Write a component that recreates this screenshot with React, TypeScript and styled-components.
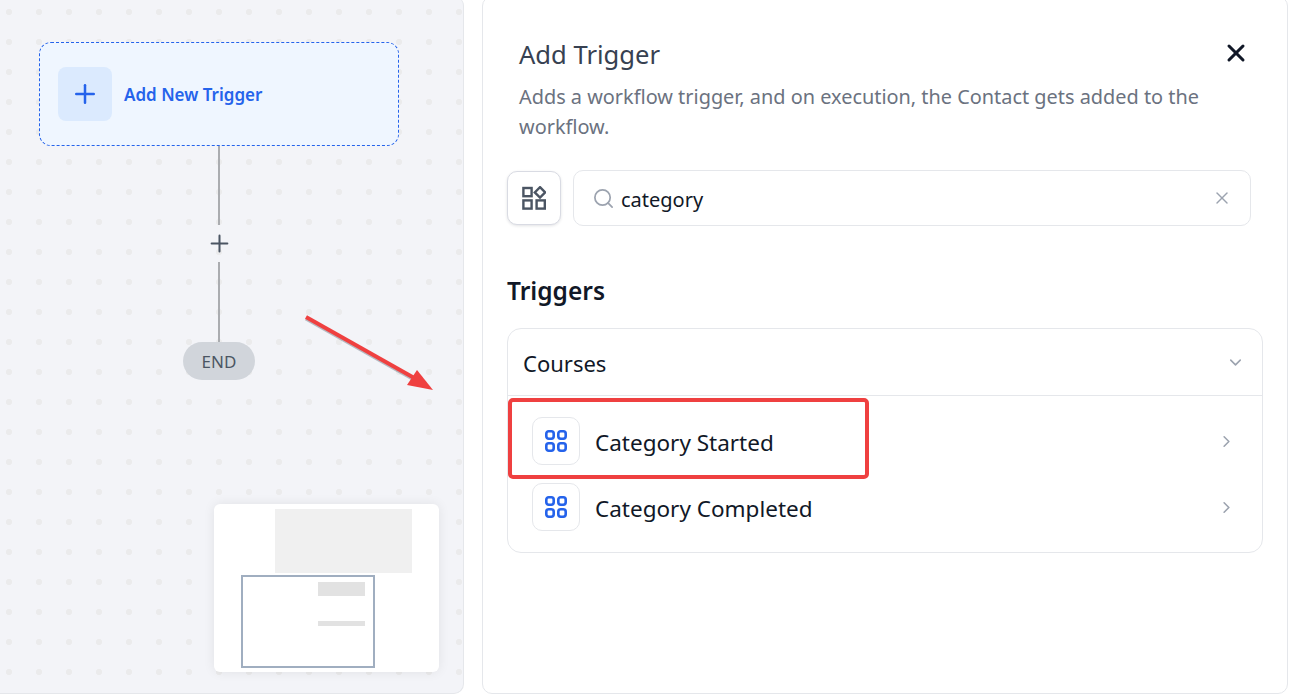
import { FC } from "react"
import styled, { createGlobalStyle } from "styled-components"
import { ChevronDown, ChevronRight, Plus, Search, X } from "lucide-react"

const GlobalStyle = createGlobalStyle`
	html, body {
		margin: 0;
		height: 100%;
		background: #fff;
		font-family: "Noto Sans", "Open Sans", sans-serif;
		overflow: hidden;
	}
	* {
		box-sizing: border-box;
	}
`

const triggers = ["Category Started", "Category Completed"]

const GridIcon: FC = () => (
	<svg width="24" height="24" viewBox="0 0 24 24" fill="none" stroke="#2563eb" strokeWidth="2.6">
		<rect x="2.3" y="2.3" width="7.4" height="7.4" rx="2.4" />
		<rect x="14.3" y="2.3" width="7.4" height="7.4" rx="2.4" />
		<rect x="2.3" y="14.3" width="7.4" height="7.4" rx="2.4" />
		<rect x="14.3" y="14.3" width="7.4" height="7.4" rx="2.4" />
	</svg>
)

const ShapesIcon: FC = () => (
	<svg width="24" height="24" viewBox="0 0 24 24" fill="none" stroke="#4b5563" strokeWidth="2.4">
		<rect x="1.4" y="2" width="8.2" height="8.2" />
		<rect x="1.4" y="14.4" width="8.2" height="8.2" />
		<rect x="14.6" y="14.4" width="8.2" height="8.2" />
		<path d="M18 1.2 L23.2 6.4 L18 11.6 L12.8 6.4 Z" />
	</svg>
)

const App: FC = () => {
	return (
		<Page>
			<GlobalStyle />
			<Canvas>
				<TriggerNode>
					<PlusTile>
						<Plus size={30} strokeWidth={2} />
					</PlusTile>
					<span>Add New Trigger</span>
				</TriggerNode>
				<Connector $height={79} />
				<AddStep>
					<Plus size={27} strokeWidth={1.8} />
				</AddStep>
				<Connector $height={80} />
				<EndPill>END</EndPill>

				<Arrow width="140" height="84" viewBox="0 0 140 84">
					<path d="M2 4.5 L112 66.5" stroke="#6b7280" strokeWidth="4" opacity="0.45" />
					<path d="M2 3 L112 65" stroke="#ef4040" strokeWidth="4" />
					<path d="M113 56 L129 76 L103 71 Z" fill="#ef4040" />
				</Arrow>

				<MiniMap>
					<svg width="225" height="168" viewBox="0 0 225 168">
						<rect x="61" y="5" width="137" height="64" fill="#f0f0f0" />
						<rect x="104" y="78" width="47" height="14" fill="#e2e2e2" />
						<rect x="104" y="117" width="47" height="5" fill="#e2e2e2" />
						<rect x="28" y="72" width="132" height="91" fill="none" stroke="#a0aec0" strokeWidth="2" />
					</svg>
				</MiniMap>
			</Canvas>

			<Panel>
				<PanelHeader>
					<div>
						<Title>Add Trigger</Title>
						<Description>Adds a workflow trigger, and on execution, the Contact gets added to the workflow.</Description>
					</div>
					<CloseButton>
						<X size={28} strokeWidth={2.6} />
					</CloseButton>
				</PanelHeader>

				<SearchRow>
					<FilterButton>
						<ShapesIcon />
					</FilterButton>
					<SearchBox>
						<Search size={23} color="#9ca3af" strokeWidth={1.8} />
						<SearchText>category</SearchText>
						<X size={20} color="#9ca3af" strokeWidth={1.7} />
					</SearchBox>
				</SearchRow>

				<SectionTitle>Triggers</SectionTitle>

				<Accordion>
					<AccordionHeader>
						<HeaderLabel>Courses</HeaderLabel>
						<ChevronDown size={19} color="#9ca3af" strokeWidth={2} />
					</AccordionHeader>
					<TriggerList>
						{triggers.map((name, i) => (
							<TriggerRow key={name}>
								<IconTile>
									<GridIcon />
								</IconTile>
								<TriggerName>{name}</TriggerName>
								<ChevronRight size={19} color="#9ca3af" strokeWidth={2} />
								{i === 0 && <Highlight />}
							</TriggerRow>
						))}
					</TriggerList>
				</Accordion>
			</Panel>
		</Page>
	)
}
export default App

const Page = styled.div`
	display: flex;
	gap: 18px;
	width: 1300px;
	height: 694px;
	padding-right: 12px;
	overflow: hidden;
`

const Canvas = styled.div`
	position: relative;
	flex: 0 0 464px;
	height: 698px;
	margin-top: -4px;
	padding: 46px 25px 0 0;
	display: flex;
	flex-direction: column;
	align-items: center;
	background-color: #f3f4f8;
	background-image: radial-gradient(circle, #ebebec 2.8px, transparent 3.3px);
	background-size: 30px 30px;
	background-position: -6px 1px;
	border: solid #e5e7eb;
	border-width: 0 1px 1px 0;
	border-radius: 0 10px 10px 0;
`

const TriggerNode = styled.div`
	flex: none;
	display: flex;
	align-items: center;
	gap: 12px;
	width: 360px;
	height: 104px;
	padding-left: 18px;
	background: #eff6ff;
	border: 1px dashed #2563eb;
	border-radius: 12px;
	color: #2563eb;
	font-size: 17px;
	font-weight: 600;
`

const PlusTile = styled.div`
	display: flex;
	align-items: center;
	justify-content: center;
	width: 54px;
	height: 54px;
	background: #dbeafe;
	border-radius: 8px;
`

const Connector = styled.div<{ $height: number }>`
	flex: none;
	width: 2px;
	height: ${p => p.$height}px;
	background: #aaacb0;
`

const AddStep = styled.div`
	flex: none;
	display: flex;
	align-items: center;
	justify-content: center;
	height: 37px;
	padding-bottom: 1px;
	color: #4b5563;
`

const EndPill = styled.div`
	flex: none;
	display: flex;
	align-items: center;
	justify-content: center;
	width: 72px;
	height: 38px;
	background: #d1d5db;
	border-radius: 19px;
	color: #4b5563;
	font-size: 17px;
`

const Arrow = styled.svg`
	position: absolute;
	left: 304px;
	top: 318px;
`

const MiniMap = styled.div`
	position: absolute;
	left: 214px;
	top: 508px;
	width: 225px;
	height: 168px;
	background: #fff;
	border-radius: 6px;
	box-shadow: 0 0 12px rgba(0, 0, 0, 0.08);
	svg {
		display: block;
	}
`

const Panel = styled.div`
	flex: 1;
	height: 698px;
	margin-top: -4px;
	padding: 4px 24px 0;
	background: #fff;
	border: 1px solid #e5e7eb;
	border-radius: 10px;
`

const PanelHeader = styled.div`
	display: flex;
	justify-content: space-between;
	align-items: flex-start;
	padding: 34px 13px 0 12px;
`

const Title = styled.h2`
	margin: 0;
	font-size: 25.6px;
	font-weight: 400;
	line-height: 40px;
	color: #374151;
`

const Description = styled.p`
	margin: 7px 0 0;
	max-width: 690px;
	font-size: 19.9px;
	line-height: 30px;
	color: #6b7280;
`

const CloseButton = styled.div`
	display: flex;
	margin-top: 4px;
	color: #111827;
`

const SearchRow = styled.div`
	display: flex;
	align-items: center;
	gap: 12px;
	margin-top: 28px;
	padding-right: 12px;
`

const FilterButton = styled.div`
	display: flex;
	align-items: center;
	justify-content: center;
	width: 54px;
	height: 54px;
	background: #fff;
	border: 1px solid #d9dbe3;
	border-radius: 10px;
	box-shadow: 0 1px 3px rgba(16, 24, 40, 0.12);
`

const SearchBox = styled.div`
	flex: 1;
	display: flex;
	align-items: center;
	height: 56px;
	padding: 0 18px;
	border: 1px solid #e5e7eb;
	border-radius: 10px;
`

const SearchText = styled.span`
	flex: 1;
	margin-left: 6px;
	padding-top: 2px;
	font-size: 20px;
	color: #111827;
`

const SectionTitle = styled.h3`
	margin: 44px 0 16px;
	font-size: 24.5px;
	font-weight: 600;
	line-height: 42px;
	color: #111827;
`

const Accordion = styled.div`
	border: 1px solid #e5e7eb;
	border-radius: 14px;
`

const AccordionHeader = styled.div`
	display: flex;
	align-items: center;
	justify-content: space-between;
	height: 67px;
	padding: 0 17px 0 15px;
	border-bottom: 1px solid #e5e7eb;
	font-size: 22px;
	color: #111827;
`

const HeaderLabel = styled.span`
	padding-top: 2px;
`

const TriggerList = styled.div`
	display: flex;
	flex-direction: column;
	gap: 18px;
	padding: 21px 26px 21px 24px;
`

const TriggerRow = styled.div`
	position: relative;
	display: flex;
	align-items: center;
	height: 48px;
`

const IconTile = styled.div`
	display: flex;
	align-items: center;
	justify-content: center;
	width: 48px;
	height: 48px;
	border: 1px solid #e5e7eb;
	border-radius: 10px;
`

const TriggerName = styled.span`
	flex: 1;
	margin-left: 15px;
	padding-top: 2px;
	font-size: 22.5px;
	color: #111827;
`

const Highlight = styled.div`
	position: absolute;
	left: -24px;
	top: -19px;
	width: 361px;
	height: 81px;
	border: 4px solid #ef4040;
	border-radius: 5px;
`
